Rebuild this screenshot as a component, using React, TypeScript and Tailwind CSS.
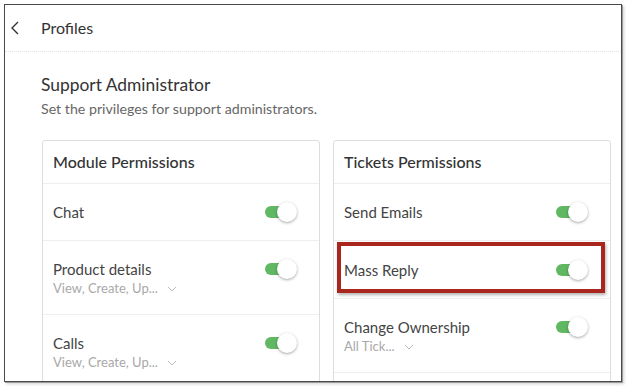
import React from "react";

const Toggle = () => (
  <div className="relative w-[32px] h-[20px] shrink-0">
    <div className="absolute left-0 top-[4px] w-[24px] h-[12px] rounded-full bg-[#60b862]" />
    <div className="absolute right-0 top-0 w-[20px] h-[20px] rounded-full bg-white shadow-[0_1px_3px_rgba(0,0,0,0.35)]" />
  </div>
);

const Chevron = () => (
  <svg width="10" height="6" viewBox="0 0 10 6" className="ml-[9px] mt-[1px]">
    <polyline points="1,1 5,5 9,1" fill="none" stroke="#bbb" strokeWidth="1" />
  </svg>
);

const Row = ({ title, sub, h = 57 }: { title: string; sub?: string; h?: number }) =>
  sub ? (
    <div className="flex justify-between pl-[10px] pr-[22px] pt-[18px] pb-[17px] border-b border-[#eeeeee]">
      <div className="flex flex-col">
        <div className="text-[15px] leading-[20px] text-[#444]">{title}</div>
        <div className="flex items-center text-[13px] leading-[18px] text-[#a8a8a8]">
          {sub}
          <Chevron />
        </div>
      </div>
      <Toggle />
    </div>
  ) : (
    <div
      className={`flex items-center justify-between pl-[10px] pr-[22px] border-b border-[#eeeeee] ${h === 58 ? "h-[58px]" : "h-[57px]"}`}
    >
      <div className="text-[15px] leading-[20px] text-[#444]">{title}</div>
      <Toggle />
    </div>
  );

export default function App() {
  return (
    <div className="w-[628px] h-[388px] bg-white relative overflow-hidden" style={{ fontFamily: "Lato, 'Open Sans', sans-serif" }}>
      <div className="absolute left-[4px] top-[4px] w-[618px] h-[378px] border border-[#4a4a4a] bg-white overflow-hidden shadow-[1px_1px_0_#9a9a9a,2px_2px_3px_rgba(0,0,0,0.18)]">
        <div className="h-[47px] flex items-center border-b border-dotted border-[#e4e4e4]">
          <svg width="10" height="14" viewBox="0 0 10 14" className="ml-[5px] mt-[-1px]">
            <polyline points="8,1 2,7 8,13" fill="none" stroke="#333" strokeWidth="1.4" />
          </svg>
          <div className="ml-[21px] text-[16px] leading-[20px] text-[#333] mt-[-1px]">Profiles</div>
        </div>
        <div className="pl-[36px] pt-[21px]">
          <div className="text-[17.4px] leading-[24px] text-[#333]">Support Administrator</div>
          <div className="mt-[2px] text-[14.2px] leading-[20px] text-[#666]">Set the privileges for support administrators.</div>
        </div>
        <div className="flex gap-[13px] pl-[37px] mt-[21px]">
          <div className="w-[278px] border border-[#dddddd] rounded-[3px] bg-white">
            <div className="h-[43px] flex items-center pl-[10px] border-b border-[#eeeeee] text-[16px] font-medium text-[#333]">
              Module Permissions
            </div>
            <Row title="Chat" />
            <Row title="Product details" sub="View, Create, Up..." />
            <Row title="Calls" sub="View, Create, Up..." />
          </div>
          <div className="w-[278px] border border-[#dddddd] rounded-[3px] bg-white">
            <div className="h-[43px] flex items-center pl-[10px] border-b border-[#eeeeee] text-[16px] font-medium text-[#333]">
              Tickets Permissions
            </div>
            <Row title="Send Emails" />
            <div className="relative">
              <Row title="Mass Reply" h={58} />
              <div className="absolute left-[3px] top-[1px] w-[268px] h-[51px] border-[4px] border-[#a8261e] shadow-[1px_2px_3px_rgba(0,0,0,0.3)]" />
            </div>
            <Row title="Change Ownership" sub="All Tick..." />
            <div className="h-[57px]" />
          </div>
        </div>
      </div>
    </div>
  );
}
